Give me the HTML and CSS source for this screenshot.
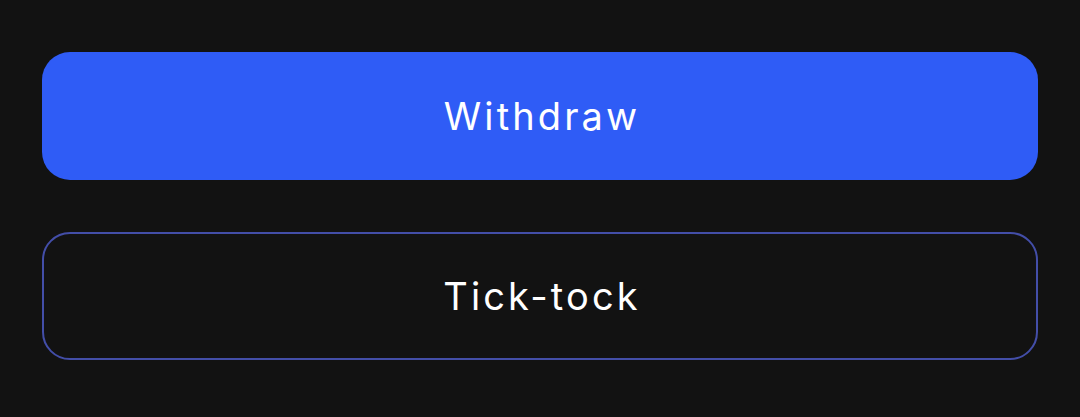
FILE: index.html
```html
<!DOCTYPE html>
<html>
<head>
<meta charset="utf-8">
<link rel="stylesheet" href="styles.css">
</head>
<body>
<div class="stack">
  <button class="btn btn-primary">Withdraw</button>
  <button class="btn btn-outline">Tick-tock</button>
</div>
</body>
</html>
```
FILE: styles.css
```css
html, body {
  margin: 0;
  padding: 0;
  background: #121212;
  width: 1080px;
  height: 417px;
  overflow: hidden;
}
.stack {
  display: flex;
  flex-direction: column;
  gap: 52px;
  padding: 52px 42px 0 42px;
}
.btn {
  box-sizing: border-box;
  width: 996px;
  height: 128px;
  border-radius: 28px;
  font-family: Inter, "Noto Sans", sans-serif;
  font-size: 38px;
  font-weight: 400;
  letter-spacing: 3.1px;
  color: #ffffff;
  display: flex;
  align-items: center;
  justify-content: center;
  padding: 0 0 0 4px;
  margin: 0;
}
.btn-primary {
  background: #2f5cf6;
  border: none;
}
.btn-outline {
  background: transparent;
  border: 2px solid #434ea8;
}
```
